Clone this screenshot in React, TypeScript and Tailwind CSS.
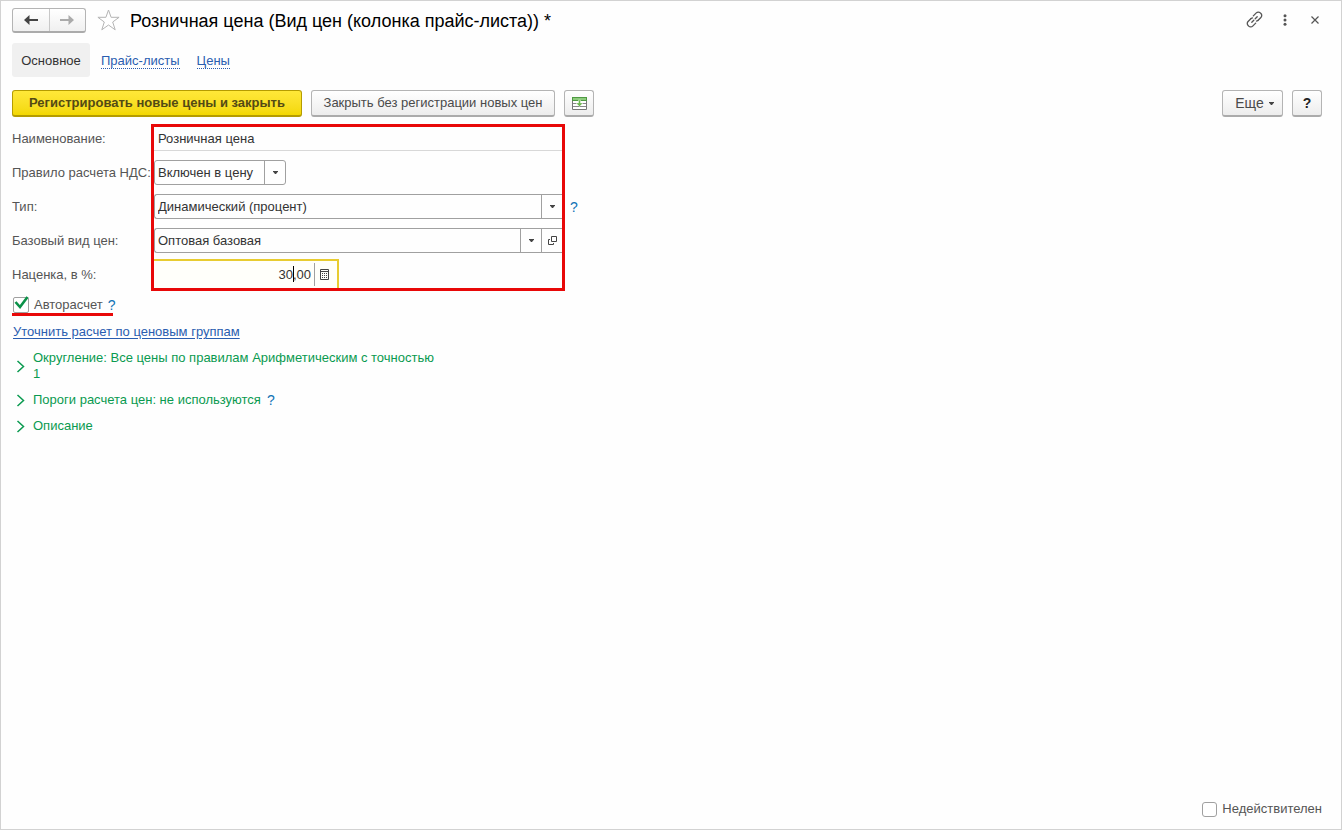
import { useState } from 'react';
import type { ReactNode } from 'react';

const GREY_BUTTON =
  'flex h-[27px] items-center justify-center rounded-[3px] border border-[#b4b4b4] border-b-2 border-b-[#ababab] bg-linear-to-b from-white to-[#ededed] text-[#4a4a4a]';

function Hint({ className = '' }: { className?: string }) {
  return (
    <button type="button" aria-label="Подсказка" className={`text-sm leading-4 text-[#1173b5] ${className}`}>
      ?
    </button>
  );
}

function Caret() {
  return (
    <svg width="5" height="3" viewBox="0 0 5 3" fill="#444" aria-hidden="true">
      <path d="M0 0h5v.6L3 3H2L0 .6z" />
    </svg>
  );
}

interface SelectFieldProps {
  id: string;
  value: string;
  className: string;
}

function SelectField({ id, value, className }: SelectFieldProps) {
  return (
    <div className={`relative h-[25px] ${className}`}>
      <select id={id} defaultValue={value} className="h-full w-full appearance-none bg-transparent pr-6 pl-[3px] outline-none">
        <option>{value}</option>
      </select>
      <span className="pointer-events-none absolute inset-y-0 right-0 flex w-[21px] items-center justify-center border-l border-[#a0a0a0]">
        <Caret />
      </span>
    </div>
  );
}

function Group({ children, hint }: { children: ReactNode; hint?: boolean }) {
  return (
    <div className="flex items-center">
      <button type="button" className="flex items-center gap-2 text-left leading-4 text-[#0a9a50]">
        <svg width="9" height="13" viewBox="0 0 9 13" fill="none" stroke="currentColor" strokeWidth="1.5" className="ml-1 shrink-0">
          <path d="M1.500 1l6 5.500-6 5.500" />
        </svg>
        <span>{children}</span>
      </button>
      {hint && <Hint className="ml-[6px]" />}
    </div>
  );
}

export default function App() {
  const [auto, setAuto] = useState(true);
  const [inactive, setInactive] = useState(false);

  return (
    <div className="flex min-h-screen flex-col border border-[#d2d2d2] bg-[#fefefe] px-[11px] pt-[7px] pb-3 font-['Liberation_Sans',Arial,sans-serif] text-[13px] text-[#333]">
      <header className="flex h-[25px] items-center">
        <div className="flex h-[25px] w-[74px] rounded-[3px] border border-[#b4b4b4] border-b-2 border-b-[#ababab] bg-linear-to-b from-white to-[#f0f0f0]">
          <button type="button" aria-label="Назад" className="flex flex-1 items-center justify-center border-r border-[#c8c8c8] text-[#444]">
            <svg width="14" height="10" viewBox="0 0 14 10" fill="currentColor">
              <path d="M0 5L5.500 0v3.900H14v2.200H5.500V10z" />
            </svg>
          </button>
          <button type="button" aria-label="Вперед" className="flex flex-1 items-center justify-center text-[#aaa]">
            <svg width="14" height="10" viewBox="0 0 14 10" fill="currentColor">
              <path d="M14 5L8.500 0v3.900H0v2.200h8.500V10z" />
            </svg>
          </button>
        </div>
        <button type="button" aria-label="Избранное" className="ml-[11px] pb-[2px]">
          <svg width="23" height="22" viewBox="0 0 23 22" fill="white" stroke="#b4b4b4">
            <path d="M11.500 1l2.600 7.300h8L15.700 13l2.500 7.800-6.700-4.800-6.700 4.800L7.300 13 .9 8.300h8z" />
          </svg>
        </button>
        <h1 className="ml-[10px] text-lg whitespace-nowrap text-black">Розничная цена (Вид цен (колонка прайс-листа)) *</h1>
        <div className="ml-auto flex items-center gap-4 pr-[7px] pb-[2px] text-[#555]">
          <button type="button" aria-label="Получить ссылку">
            <svg width="17" height="17" viewBox="0 0 17 17" fill="none" stroke="currentColor" strokeWidth="1.300" strokeLinecap="round">
              <path d="M5.800 11.200l2-2M9.200 7.800l2-2" />
              <path d="M7.300 4.900l3-3a2.800 2.800 0 0 1 4 0l.6.600a2.800 2.800 0 0 1 0 4l-3 3" />
              <path d="M9.700 12.100l-3 3a2.800 2.800 0 0 1-4 0l-.6-.6a2.800 2.800 0 0 1 0-4l3-3" />
              <path d="M11.900 9.500l-1.400.6M5.100 7.500l1.400-.6" />
            </svg>
          </button>
          <button type="button" aria-label="Меню" className="flex w-3 justify-center">
            <svg width="4" height="12" viewBox="0 0 4 12" fill="currentColor">
              <circle cx="2" cy="1.700" r="1.500" />
              <circle cx="2" cy="6" r="1.500" />
              <circle cx="2" cy="10.300" r="1.500" />
            </svg>
          </button>
          <button type="button" aria-label="Закрыть" className="flex w-4 justify-center">
            <svg width="8" height="8" viewBox="0 0 8 8" stroke="currentColor" strokeWidth="1.200">
              <path d="M.5.5l7 7M7.500.5l-7 7" />
            </svg>
          </button>
        </div>
      </header>

      <nav className="mt-[10px] flex h-[34px] items-center pt-px">
        <a href="#main" className="-mt-px flex h-[34px] w-[78px] items-center justify-center rounded-[3px] bg-[#f0f0f0] pt-px">
          Основное
        </a>
        <a href="#price-lists" className="mt-px ml-[11px] border-b border-dotted border-[#2a5db0] leading-[14px] text-[#2a5db0]">Прайс-листы</a>
        <a href="#prices" className="mt-px ml-[17px] border-b border-dotted border-[#2a5db0] leading-[14px] text-[#2a5db0]">Цены</a>
      </nav>

      <div className="mt-[13px] flex items-center gap-[9px] pr-2">
        <button
          type="button"
          className="flex h-[27px] w-[290px] items-center justify-center rounded-[3px] border border-[#b59c00] border-b-2 bg-linear-to-b from-[#ffe838] to-[#f3d800] font-bold text-[#534a14]"
        >
          Регистрировать новые цены и закрыть
        </button>
        <button type="button" className={`${GREY_BUTTON} w-[244px]`}>
          Закрыть без регистрации новых цен
        </button>
        <button type="button" aria-label="Загрузить цены" className={`${GREY_BUTTON} w-[30px]`}>
          <svg width="15" height="13" viewBox="0 0 15 13" fill="none">
            <path d="M.5.5h14v12H.5z" fill="white" stroke="#777" />
            <path d="M0 0h15v4H0z" fill="#4f9a42" />
            <path d="M1 1h13v2H1z" fill="#8ccb7c" />
            <path d="M1 6.500h13M1 9.500h13" stroke="#888" />
            <path d="M6.500 3h2v3H11L7.500 9.500 4 6h2.500z" fill="#6cb84f" stroke="white" strokeWidth=".4" />
          </svg>
        </button>
        <button type="button" className={`${GREY_BUTTON} ml-auto w-[61px] gap-[5px] pl-1`}>
          <span className="text-sm">Еще</span>
          <Caret />
        </button>
        <button type="button" aria-label="Справка" className={`${GREY_BUTTON} w-[30px] text-sm font-bold text-[#222]`}>
          ?
        </button>
      </div>

      <div className="mt-[5px] flex items-start">
        <div className="flex w-[139px] flex-col whitespace-nowrap text-[#555]">
          <label htmlFor="name" className="flex h-[34px] items-center">Наименование:</label>
          <label htmlFor="vat" className="flex h-[34px] items-center">Правило расчета НДС:</label>
          <label htmlFor="kind" className="flex h-[34px] items-center">Тип:</label>
          <label htmlFor="base" className="flex h-[34px] items-center">Базовый вид цен:</label>
          <label htmlFor="markup" className="flex h-[34px] items-center">Наценка, в %:</label>
        </div>
        <div className="mt-[2px] w-[414px] border-3 border-[#e80808]">
          <input
            id="name"
            defaultValue="Розничная цена"
            className="block h-6 w-full border-b border-[#d8d8d8] bg-transparent pl-1 outline-none"
          />
          <SelectField id="vat" value="Включен в цену" className="mt-[9px] w-[132px] rounded-[3px] border border-[#a0a0a0]" />
          <SelectField id="kind" value="Динамический (процент)" className="mt-[9px] rounded-l-[3px] border border-r-0 border-[#a0a0a0]" />
          <div className="mt-[9px] flex h-[25px] rounded-l-[3px] border border-r-0 border-[#a0a0a0]">
            <SelectField id="base" value="Оптовая базовая" className="-my-px flex-1" />
            <button type="button" aria-label="Открыть" className="flex w-[21px] items-center justify-center border-l border-[#a0a0a0]">
              <svg width="9" height="9" viewBox="0 0 9 9" fill="none" stroke="#444">
                <path d="M3.500.5h5v5h-5zM2 3.500H.5v5h5V7" />
              </svg>
            </button>
          </div>
          <div className="mt-[6px] flex h-[29px] w-[185px] border-t-2 border-r-2 border-[#e8cc30] bg-[#fffffa]">
            <div className="relative flex-1">
              <input
                id="markup"
                defaultValue="30,00"
                inputMode="decimal"
                className="h-full w-full bg-transparent pr-[3px] text-right outline-none"
              />
              <span className="pointer-events-none absolute top-[5px] right-[20px] h-4 w-px bg-black" />
            </div>
            <button type="button" aria-label="Калькулятор" className="my-[2px] flex w-[23px] items-center justify-center border-l border-[#a0a0a0] pr-[3px]">
              <svg width="9" height="11" viewBox="0 0 9 11" fill="none" stroke="#444">
                <path d="M.5.5h8v10h-8zM.5 2.500h8" />
                <path d="M2 4.500h5M2 6.500h5M2 8.500h5" strokeDasharray="1 1" />
              </svg>
            </button>
          </div>
        </div>
        <div className="mt-[68px] ml-[5px] flex h-[34px] items-center">
          <Hint />
        </div>
      </div>

      <div className="mt-1 flex h-5 w-[101px] items-center gap-[5px] border-b-3 border-[#e80808] whitespace-nowrap text-[#555]">
        <span className="relative ml-px flex">
          <input
            id="auto"
            type="checkbox"
            checked={auto}
            onChange={(e) => setAuto(e.target.checked)}
            className="size-4 appearance-none rounded-xs border border-[#a0a0a0] bg-white"
          />
          {auto && (
            <svg width="15" height="13" viewBox="0 0 15 13" fill="none" stroke="#0b9148" strokeWidth="2.600" className="pointer-events-none absolute bottom-1 left-px">
              <path d="M1.500 6l4.500 5L13.500 1" />
            </svg>
          )}
        </span>
        <label htmlFor="auto">Авторасчет</label>
        <Hint />
      </div>

      <a href="#groups" className="mt-2 ml-px self-start leading-4 text-[#2a5db0] underline underline-offset-2">
        Уточнить расчет по ценовым группам
      </a>

      <div className="mt-[10px] flex w-[430px] flex-col gap-[10px]">
        <Group>Округление: Все цены по правилам Арифметическим с точностью 1</Group>
        <Group hint>Пороги расчета цен: не используются</Group>
        <Group>Описание</Group>
      </div>

      <footer className="mt-auto flex items-center justify-end gap-[5px] pr-2 text-[#555]">
        <input
          id="inactive"
          type="checkbox"
          checked={inactive}
          onChange={(e) => setInactive(e.target.checked)}
          className="size-[15px] appearance-none rounded-[3px] border border-[#a0a0a0] bg-white"
        />
        <label htmlFor="inactive" className="leading-4">Недействителен</label>
      </footer>
    </div>
  );
}
